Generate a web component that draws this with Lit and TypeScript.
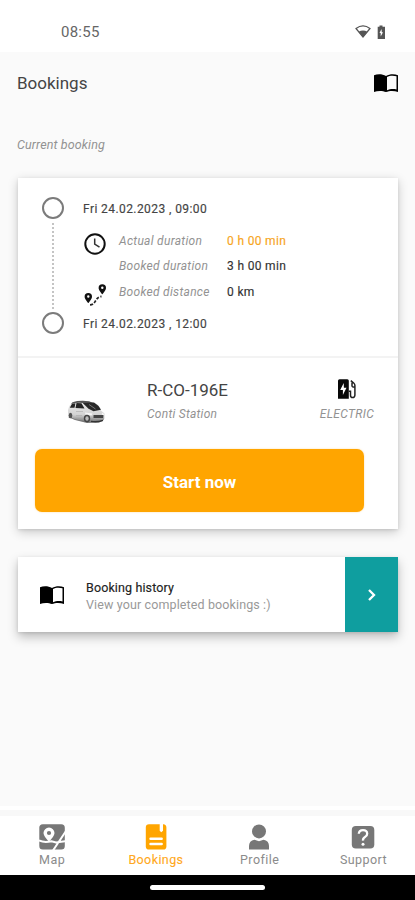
import { LitElement, html, css, svg } from "lit";
import { customElement, property } from "lit/decorators.js";

const bookIcon = html`<svg class="book" viewBox="0 0 24 18" width="24" height="18">
  <path fill="currentColor" d="M0 1.2C3.5-.2 8.600-.1 12 2 15.400-.1 20.500-.2 24 1.200V18C20.500 16.500 15.400 16.500 12 18 8.600 16.500 3.500 16.500 0 18Z"/>
  <path fill="var(--page, #fff)" d="M13 2.900C15.700 1.500 19.500 1.500 22.500 2.300V15.400C19.500 14.800 15.700 14.900 13 16.200Z"/>
</svg>`;

const clockIcon = html`<svg viewBox="0 0 22 22" width="22" height="22">
  <circle cx="11" cy="11" r="9.700" fill="none" stroke="#111" stroke-width="2"/>
  <path d="M10.700 5.500V11L15.500 14.200" fill="none" stroke="#333" stroke-width="1.500"/>
</svg>`;

const routeIcon = html`<svg viewBox="0 0 22 22" width="22" height="22">
  <path fill="#111" fill-rule="evenodd" d="M4.300 9a3.700 3.700 0 0 1 3.700 3.700C8 15.200 4.300 19 4.300 19S.6 15.200.6 12.700A3.700 3.700 0 0 1 4.300 9Zm0 2.300a1.200 1.200 0 1 0 0 2.400 1.200 1.200 0 0 0 0-2.400Z"/>
  <path fill="#111" fill-rule="evenodd" d="M18.300.3A3.700 3.700 0 0 1 22 4C22 6.500 18.300 10.300 18.300 10.300S14.600 6.500 14.600 4A3.700 3.700 0 0 1 18.300.3Zm0 2.300a1.200 1.200 0 1 0 0 2.400 1.200 1.200 0 0 0 0-2.400Z"/>
  <path d="M6 20.800C12.500 20.800 10.500 13 17.500 12.500" fill="none" stroke="#222" stroke-width="1.800" stroke-dasharray="3 1.600"/>
</svg>`;

const carIcon = html`<svg class="car" viewBox="0 0 38 24" width="38" height="24">
  <defs>
    <linearGradient id="paint" x1="0" y1="0" x2="0" y2="1">
      <stop offset="0" stop-color="#eee"/><stop offset=".65" stop-color="#d3d3d3"/><stop offset="1" stop-color="#777"/>
    </linearGradient>
  </defs>
  <path d="M1 17 8 20 20 23 32 22.500 37 19.500 30 17Z" fill="#777"/>
  <path d="M1 10Q2 5 5.500 2.200 12 .2 22 1.200L30.500 4.200 34 10.500 37.500 13.500 37.200 19 35 21.200 24 22 9 19.500 1.300 16.500Z" fill="url(#paint)"/>
  <path d="M5.500 2.200Q12 .2 22 1.200L27 3.200 16 3Q10 2 4 4Z" fill="#555"/>
  <path d="M5 3.800 8.500 3.200 7.500 7.800 2.800 7.800Z M9.500 3 14.500 3.300 17.500 8.500 8.500 7.900Z" fill="#252525"/>
  <path d="M15.700 3 27 2.500Q31.500 5 34 9.700L26.500 11.200 21.500 8.700Z" fill="#292929"/>
  <path d="M22 4.500 28.500 9" stroke="#777"/>
  <path d="M18 12.500 25.500 13.500 24.500 15.500 18.500 14.500Z M35 12.500 37.200 14 36.800 15.800 34.800 14.500Z" fill="#f5f5f5"/>
  <path d="M26.500 15H36.500L36 18H26.500Z" fill="#444"/>
  <path d="M9 11.500H16M9 15.500H15" stroke="#aaa" stroke-width=".6"/>
  <ellipse cx="3.500" cy="15.500" rx="1.800" ry="2.800" fill="#555"/>
  <ellipse cx="20" cy="18.500" rx="3.200" ry="3.700" fill="#444"/><ellipse cx="20" cy="18.500" rx="1.700" ry="2.200" fill="#bbb"/>
  <path d="M24 21.300Q30 22.600 36 20.300" fill="none" stroke="#333" stroke-width="1.300"/>
</svg>`;

const chargerIcon = html`<svg viewBox="0 0 18 20" width="18" height="20">
  <path fill="#080808" fill-rule="evenodd" d="M1.500.3H9.300Q10.800.3 10.800 1.800V19.700H0V1.800Q0 .3 1.500.3ZM5.700 4 2.200 11H4.900V16L8.500 8.700H5.900Z"/>
  <path d="M10.800 12.300H12.500V16.200Q12.500 18.600 14.600 18.600T16.900 16.200V6.500Q16.900 5 15.700 4L12.800 1.600M14 3.500V7.200Q14.200 8.300 16.700 8.300" fill="none" stroke="#222" stroke-width="1.500"/>
</svg>`;

const tabIcons: Record<string, unknown> = {
  map: svg`<rect x=".3" y=".3" width="25.500" height="25.200" rx="3.500" fill="#777"/>
    <path d="M0 16.500Q5 19 12.500 17.300L17 18.500 26.500 17.200M14 26.500 27 7" fill="none" stroke="#fff" stroke-width="2"/>
    <path fill="#fff" fill-rule="evenodd" d="M10 3.600A5.500 5.500 0 0 1 15.500 9C15.500 12.500 10 17.600 10 17.600S4.500 12.500 4.500 9A5.500 5.500 0 0 1 10 3.600ZM10 6.900A2.100 2.100 0 1 0 10 11.100 2.100 2.100 0 0 0 10 6.900Z"/>`,
  bookings: svg`<path fill="#ffa500" d="M6 .3H20.300Q23.400.5 23.400 3.500V22.500Q23.400 25.600 20.300 25.600H6Q2.800 25.600 2.800 22.500V3.500Q2.800.3 6 .3Z"/>
    <path d="M16.700 0V6.800L18.300 8.200 20 6.800V0Z" fill="#fff"/>
    <path d="M7.500 14.700H18.700M7.500 20H18.700" stroke="#fff" stroke-width="2.400" stroke-linecap="round"/>`,
  profile: svg`<circle cx="13" cy="7.400" r="7" fill="#777"/><path d="M3 25.500V22Q3 16.600 8.500 15.700L13 17.300 17.500 15.700Q23 16.600 23 22V25.500Z" fill="#777"/>`,
  support: svg`<rect x="1.800" y="2" width="22.500" height="22.500" rx="4" fill="#777"/>
    <path d="M8.800 9.800Q9 6.200 13 6.200T17.200 9.700Q17.200 11.800 15 13T13 16.700" fill="none" stroke="#fff" stroke-width="2.300"/><circle cx="13" cy="20.300" r="1.500" fill="#fff"/>`,
};

@customElement("tab-item")
class TabItem extends LitElement {
  @property() icon = "map";
  @property() label = "";
  @property({ type: Boolean, reflect: true }) active = false;
  static styles = css`
    :host { display: flex; flex-direction: column; align-items: center; color: #8b8b8b; padding-top: 8px; }
    :host([active]) { color: #ffa820; }
    svg { display: block; }
    .label { font-size: 12.5px; line-height: 16px; margin-top: 2px; letter-spacing: .45px; margin-right: -.45px; }
    :host([active]) .label { letter-spacing: .4px; -webkit-text-stroke: .1px; }
  `;
  render() {
    return html`<svg viewBox="0 0 26 26" width="26" height="26">${tabIcons[this.icon]}</svg><span class="label">${this.label}</span>`;
  }
}

@customElement("app-root")
class AppRoot extends LitElement {
  static styles = css`
    :host { display: flex; flex-direction: column; height: 900px; width: 415px; overflow: hidden; background: #fafafa; font-family: Roboto, sans-serif; color: #333; }
    * { box-sizing: border-box; }
    svg { display: block; flex: none; }
    .status { height: 52px; flex: none; background: #fff; display: flex; align-items: center; padding: 12px 28px 0 61px; }
    .time { font-size: 15px; letter-spacing: .25px; color: #666; flex: 1; }
    .header { height: 62px; flex: none; display: flex; align-items: center; justify-content: space-between; padding: 0 17px; --page: #fafafa; color: #000; }
    .title { font-size: 17px; letter-spacing: 0; color: #444; }
    .section { height: 64px; flex: none; padding: 22px 17px 0; font-size: 12.5px; line-height: 18px; font-style: italic; letter-spacing: .12px; color: #929292; }
    .card { margin: 0 17px 0 18px; background: #fff; box-shadow: 0 3px 10px rgba(0,0,0,.2), 0 1px 3px rgba(0,0,0,.1); flex: none; }
    .booking { height: 351px; }
    .trip { display: flex; height: 180px; border-bottom: 2px solid #f3f3f3; padding: 19px 0 0 24px; }
    .rail { width: 22px; display: flex; flex-direction: column; align-items: center; height: 137px; }
    .ring { width: 22px; height: 22px; border: 2px solid #7b7b7b; border-radius: 50%; flex: none; }
    .dots { flex: 1; margin: 4px 0 1px; width: 2px; background: repeating-linear-gradient(#c4c4c4 0 2px, transparent 2px 4px); }
    .details { margin-left: 19px; padding-top: 1px; }
    .date { font-size: 12px; line-height: 22px; letter-spacing: .42px; color: #444; -webkit-text-stroke: .15px; white-space: pre; }
    .facts { display: grid; grid-template-columns: 36px 108px auto; grid-template-rows: 25.5px 25.5px 25.5px; align-items: center; height: 77px; margin: 8px 0; font-size: 12px; }
    .facts svg { margin-left: 1px; transform: translateY(3px); }
    .fact { font-style: italic; color: #929292; letter-spacing: .3px; }
    .value { color: #333; letter-spacing: .33px; -webkit-text-stroke: .15px; }
    .value.live { color: #f7a51d; }
    .vehicle { height: 91px; display: grid; grid-template-columns: 129px 1fr 102px; padding-top: 20px; }
    .car { margin: 22px 0 0 49px; }
    .plate { font-size: 17px; line-height: 24px; letter-spacing: 0; color: #444; }
    .note { font-size: 12px; line-height: 24px; font-style: italic; letter-spacing: .25px; color: #929292; }
    .fuel { display: flex; flex-direction: column; align-items: center; }
    .fuel .note { letter-spacing: .35px; }
    .fuel svg { margin: 1px 0 3px; }
    .start { display: block; border: 0; width: 329px; height: 63px; margin-left: 17px; border-radius: 7px; background: #ffa500; color: #fff; font: 700 17px Roboto, sans-serif; padding: 2px 0 0; letter-spacing: 0; box-shadow: 0 0 2px rgba(255,165,0,.4); }
    .history { display: flex; align-items: center; height: 75px; margin-top: 28px; padding-left: 22px; color: #000; box-shadow: 0 5px 10px rgba(0,0,0,.25), 0 1px 3px rgba(0,0,0,.1); }
    .copy { flex: 1; padding: 2px 0 0 22px; font-size: 12.5px; line-height: 17px; }
    .copy-title { color: #222; letter-spacing: .12px; -webkit-text-stroke: .15px; }
    .copy-text { color: #999; letter-spacing: .12px; }
    .go { width: 53px; height: 75px; background: #0f9e9f; display: grid; place-items: center; }
    .spacer { flex: 1; }
    .nav { height: 69px; flex: none; border-top: 4px solid #fff; background: #fff; }
    .edge { height: 6px; background: #f8f8f8; }
    .tabs { height: 59px; display: grid; grid-template-columns: repeat(4, 103.8px); background: #fff; }
    .gesture { height: 25px; flex: none; background: #000; display: flex; align-items: center; justify-content: center; }
    .pill { width: 115px; height: 5px; border-radius: 3px; background: #fff; }
  `;
  render() {
    return html`
      <div class="status"><span class="time">08:55</span>
        <svg viewBox="0 0 32 16" width="32" height="16">
          <path d="M1 4.500Q8 -.7 15 4.500L8 13Z" fill="none" stroke="#555" stroke-width="1.200"/><path d="M3.600 7.700Q8 5.200 12.400 7.700L8 13Z" fill="#555"/>
          <path d="M24.500 1.500H27.500V2.800H30V15H22.700V2.800H24.500Z" fill="#555"/><path d="M26.500 5 24.500 9H25.700V12.500L28 8.300H26.800Z" fill="#fff"/>
        </svg>
      </div>
      <div class="header"><span class="title">Bookings</span>${bookIcon}</div>
      <div class="section">Current booking</div>
      <div class="card booking">
        <div class="trip">
          <div class="rail"><div class="ring"></div><div class="dots"></div><div class="ring"></div></div>
          <div class="details">
            <div class="date">Fri 24.02.2023 , 09:00</div>
            <div class="facts">
              ${clockIcon}<span class="fact">Actual duration</span><span class="value live">0 h 00 min</span>
              <span></span><span class="fact">Booked duration</span><span class="value">3 h 00 min</span>
              ${routeIcon}<span class="fact">Booked distance</span><span class="value">0 km</span>
            </div>
            <div class="date">Fri 24.02.2023 , 12:00</div>
          </div>
        </div>
        <div class="vehicle">
          ${carIcon}
          <div><div class="plate">R-CO-196E</div><div class="note">Conti Station</div></div>
          <div class="fuel">${chargerIcon}<div class="note">ELECTRIC</div></div>
        </div>
        <button class="start">Start now</button>
      </div>
      <div class="card history">
        ${bookIcon}
        <div class="copy"><div class="copy-title">Booking history</div><div class="copy-text">View your completed bookings :)</div></div>
        <div class="go"><svg viewBox="0 0 10 14" width="10" height="14"><path d="M2 2 7 7 2 12" fill="none" stroke="#fff" stroke-width="2.300"/></svg></div>
      </div>
      <div class="spacer"></div>
      <div class="nav"><div class="edge"></div><div class="tabs">
        <tab-item icon="map" label="Map"></tab-item><tab-item icon="bookings" label="Bookings" active></tab-item>
        <tab-item icon="profile" label="Profile"></tab-item><tab-item icon="support" label="Support"></tab-item>
      </div></div>
      <div class="gesture"><div class="pill"></div></div>`;
  }
}
